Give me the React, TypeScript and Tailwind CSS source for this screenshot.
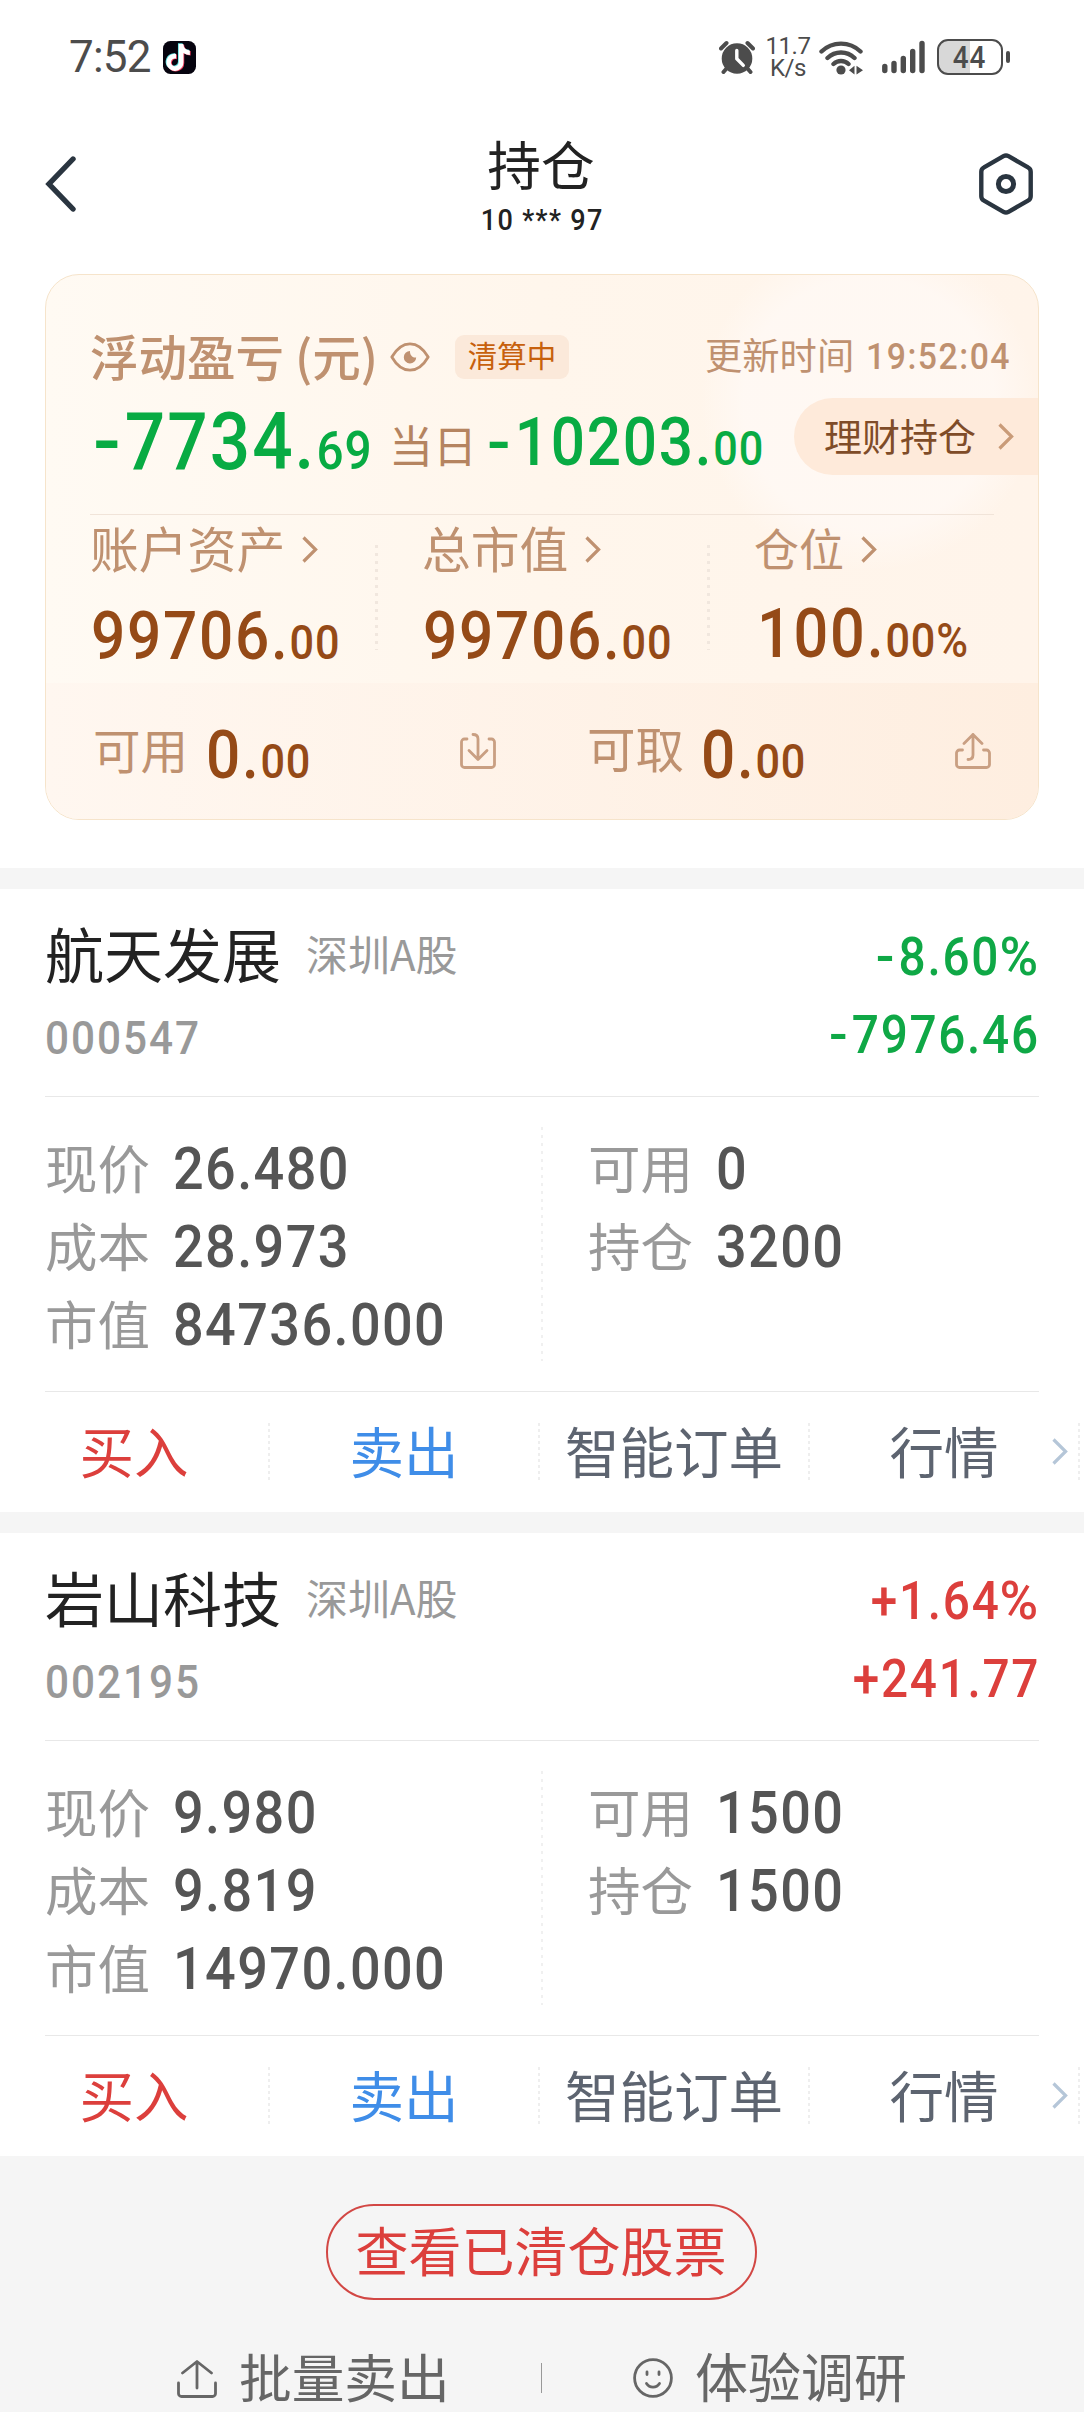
import type { ReactNode } from 'react'
import clsx from 'clsx'

type Stock = {
  name: string
  market: string
  code: string
  percent: string
  profit: string
  price: string
  cost: string
  value: string
  available: string
  holding: string
}

const stocks: Stock[] = [
  {
    name: '航天发展',
    market: '深圳A股',
    code: '000547',
    percent: '-8.60%',
    profit: '-7976.46',
    price: '26.480',
    cost: '28.973',
    value: '84736.000',
    available: '0',
    holding: '3200',
  },
  {
    name: '岩山科技',
    market: '深圳A股',
    code: '002195',
    percent: '+1.64%',
    profit: '+241.77',
    price: '9.980',
    cost: '9.819',
    value: '14970.000',
    available: '1500',
    holding: '1500',
  },
]

// Narrowed digits with open tracking, close to a DIN face
const NUM = "font-['Roboto','Liberation_Sans',sans-serif] font-medium leading-none whitespace-nowrap scale-x-90"

function Chevron({ className }: { className?: string }) {
  return (
    <svg viewBox="0 0 16 27" className={clsx('h-[27px] w-4 shrink-0', className)} fill="none" stroke="currentColor" strokeWidth="3.2">
      <path d="M1.5 1.5 13.6 13.5 1.5 25.5" />
    </svg>
  )
}

// Amount with a large integer part and smaller decimals
function Amount({ int, frac, className, fracClassName }: { int: string; frac: string; className?: string; fracClassName?: string }) {
  const negative = int.startsWith('-')
  return (
    <div className={clsx(NUM, 'origin-left tracking-[0.029em]', className)}>
      {negative ? <span className="-ml-px mr-[6px] inline-block origin-left scale-x-115">-</span> : null}
      {negative ? int.slice(1) : int}.
      <span className={clsx('tracking-[0.018em]', fracClassName ?? 'text-[48px]')}>{frac}</span>
    </div>
  )
}

const notePath =
  'M19.59 6.69a4.83 4.83 0 0 1-3.77-4.25V2h-3.45v13.67a2.89 2.89 0 0 1-5.2 1.74 2.89 2.89 0 0 1 2.31-4.64 2.93 2.93 0 0 1 .88.13V9.4a6.84 6.84 0 0 0-1-.05A6.33 6.33 0 0 0 5 20.1a6.34 6.34 0 0 0 10.86-4.43v-7a8.16 8.16 0 0 0 4.77 1.52v-3.4a4.85 4.85 0 0 1-1-.1z'

function StatusBar() {
  return (
    <div className="flex h-[114px] items-center pl-[69px] text-[#4c4c4c]">
      <span className="w-[94px] font-['Roboto',sans-serif] text-[44px] leading-none tracking-[-0.8px]">7:52</span>
      <svg viewBox="0 0 33 33" className="h-[33px] w-[33px]">
        <rect width="33" height="33" rx="7.5" fill="#06040f" />
        <g transform="translate(-.8 .3) scale(1.34)">
          <path fill="#5fe3e3" transform="translate(-.6 -.5)" d={notePath} />
          <path fill="#ee3a5c" transform="translate(.6 .5)" d={notePath} />
          <path fill="#fff" d={notePath} />
        </g>
      </svg>

      <svg viewBox="0 0 36 34" className="ml-[523px] h-[34px] w-9">
        <circle cx="18" cy="18.5" r="15.3" fill="#4c4c4c" />
        <path d="M2 8.5 7.5 3M34 8.5 28.5 3M8 28l-3.5 4M28 28l3.5 4" stroke="#4c4c4c" strokeWidth="4" strokeLinecap="round" />
        <path d="M17.8 10.5v8.2l6.5 6.7" stroke="#fff" strokeWidth="3.4" fill="none" strokeLinecap="round" strokeLinejoin="round" />
      </svg>
      <p className="ml-[10px] w-[46px] text-center font-['Roboto',sans-serif] text-[24px] leading-[22px] tracking-[-0.5px]">
        11.7
        <br />
        K/s
      </p>
      <svg viewBox="0 0 44 35" className="ml-[8px] h-[35px] w-11" fill="none" stroke="#4c4c4c" strokeWidth="4.4" strokeLinecap="round">
        <path d="M2.5 11.5a28 28 0 0 1 39 0M8.5 18a19.5 19.5 0 0 1 27 0M14.5 24a11 11 0 0 1 15 0" />
        <circle cx="22" cy="30" r="4.6" fill="#4c4c4c" stroke="none" />
        <path d="M30 30.2l5.5-4.4v8.6zM44 30.2l-6.5-4.4v8.6z" fill="#4c4c4c" stroke="none" />
      </svg>
      <svg viewBox="0 0 43 34" className="ml-[19px] h-[34px] w-[43px]" stroke="#4c4c4c" strokeWidth="5.4" strokeLinecap="round">
        <path d="M2.8 26.5v4M12 23.5v7M21.3 18.5v12M30.7 11.5v19M40 3.5v27" />
      </svg>
      <div className="ml-3 flex h-9 w-[66px] items-center justify-center rounded-[11px] border-[2.5px] border-[#4c4c4c] bg-[linear-gradient(to_right,#d8d8d8_50%,transparent_50%)]">
        <span className={clsx(NUM, 'text-[31px] tracking-[0.03em]')}>44</span>
      </div>
      <div className="ml-[3px] h-3 w-[4px] rounded-full bg-[#4c4c4c]" />
    </div>
  )
}

function Header() {
  return (
    <header className="mb-5 grid h-[140px] grid-cols-[1fr_auto_1fr] items-center">
      <svg viewBox="0 0 31 56" className="ml-[45px] h-14 w-[31px]" fill="none" stroke="#2a3540" strokeWidth="5.4" strokeLinecap="round">
        <path d="M28 3 4 28l24 25" />
      </svg>
      <div className="flex flex-col items-center self-start pt-[22px] text-[#222]">
        <h1 className="mr-[2px] text-[53.7px] leading-none">持仓</h1>
        <p className={clsx(NUM, 'mt-[15px] text-[30px] tracking-[0.05em]')}>10 *** 97</p>
      </div>
      <svg viewBox="0 0 54 62" className="mr-[51px] h-[62px] w-[54px] justify-self-end" fill="none" stroke="#2a3540" strokeWidth="4.4" strokeLinejoin="round">
        <path d="M24.5 3.2a5 5 0 0 1 5 0l19.5 11.2a5 5 0 0 1 2.7 4.4v24.4a5 5 0 0 1-2.7 4.4L29.5 58.8a5 5 0 0 1-5 0L5 47.6a5 5 0 0 1-2.7-4.4V18.8A5 5 0 0 1 5 14.4z" />
        <circle cx="27" cy="31" r="7.6" strokeWidth="5" />
      </svg>
    </header>
  )
}

function Metric({ label, children }: { label: string; children: ReactNode }) {
  return (
    <div className="w-[285px] shrink-0">
      <div className="mt-2 flex h-12 items-center text-[#bf9170]">
        <span className={clsx('leading-none', label.length === 2 ? 'text-[45px]' : 'text-[48.8px]')}>{label}</span>
        <Chevron className="mt-1 ml-[17px]" />
      </div>
      {children}
    </div>
  )
}

function Dots({ className }: { className: string }) {
  return <div className={clsx('shrink-0', className)} />
}

function AssetCard() {
  return (
    <section className="relative mx-[45px] mb-12 h-[546px] overflow-hidden rounded-[34px] border border-[#f6e4cb] bg-linear-to-r from-[#fffaf3] via-[#fff6ec] to-[#fff4ea]">
      <div className="absolute top-[-40px] left-[655px] h-[336px] w-[336px] rounded-full bg-[radial-gradient(closest-side,#fff9f5_75%,transparent)] opacity-80" />
      <div className="relative">
        <div className="flex h-[112px] items-center pt-[52px] pr-[30px] pl-11">
          <h2 className="mb-1 w-[300px] text-[48.5px] leading-none font-medium whitespace-nowrap text-[#bf9170]">浮动盈亏 (元)</h2>
          <svg viewBox="0 0 40 30" className="h-[30px] w-10" fill="none" stroke="#bf9170" strokeWidth="2.8">
            <path d="M1.8 15C7 6 13 1.8 20 1.8S33 6 38.2 15C33 24 27 28.2 20 28.2S7 24 1.8 15z" strokeLinejoin="round" />
            <path d="M20 9a6.2 6.2 0 1 0 6.2 6.4c-3.5.8-6.5-2.4-6.2-6.4z" fill="#bf9170" stroke="none" />
          </svg>
          <span className="ml-[25px] flex h-11 w-[114px] items-center justify-center rounded-[9px] bg-[#fbe9da] pb-1 text-[29.5px] leading-none text-[#c7600c]">
            清算中
          </span>
          <div className="ml-auto flex items-center whitespace-nowrap text-[#bf9170]">
            <span className="mb-1 w-[161px] text-[37.3px] leading-none">更新时间</span>
            <span className={clsx(NUM, 'w-[142px] origin-left text-[37.5px] tracking-[0.045em]')}>19:52:04</span>
          </div>
        </div>

        <div className="flex h-[127px] items-start pl-12 text-[#08ab43]">
          <Amount int="-7734" frac="69" className="mt-4 w-[295px] text-[79px]" fracClassName="text-[53px]" />
          <span className="mt-[35px] w-[99px] text-[44px] leading-none text-[#b58460]">当日</span>
          <Amount int="-10203" frac="00" className="mt-[22px] w-[290px] text-[67px]" />
          <button
            type="button"
            className="mt-[11px] ml-auto flex h-[77px] w-[244px] shrink-0 items-center rounded-l-full bg-[#feeada] pl-[30px] text-[#7f4c28]"
          >
            <span className="mb-1 text-[38px] leading-none">理财持仓</span>
            <Chevron className="ml-[22px] text-[#c99b78]" />
          </button>
        </div>

        <div className="mx-11 h-px bg-[#f1e4d9]" />

        <div className="flex h-[168px] pl-11 text-[#954a17]">
          <Metric label="账户资产">
            <Amount int="99706" frac="00" className="mt-8 ml-px text-[67px]" />
          </Metric>
          <Dots className="mt-[30px] mr-11 h-[105px] w-[3px] bg-[repeating-linear-gradient(to_bottom,#f1e7de_0_3px,transparent_3px_8px)]" />
          <Metric label="总市值">
            <Amount int="99706" frac="00" className="mt-8 ml-px text-[67px]" />
          </Metric>
          <Dots className="mt-[30px] mr-11 h-[105px] w-[3px] bg-[repeating-linear-gradient(to_bottom,#f1e7de_0_3px,transparent_3px_8px)]" />
          <Metric label="仓位">
            <Amount int="100" frac="00%" className="mt-[29px] ml-[3px] text-[68px]" />
          </Metric>
        </div>

        <div className="flex h-[136px] items-start bg-linear-to-r from-[#fff7f0] to-[#feeee0] pl-[47px] text-[#954a17]">
          <span className="mt-[42px] w-[113px] text-[47.5px] leading-none text-[#bf9170]">可用</span>
          <Amount int="0" frac="00" className="mt-[39px] w-[254px] text-[67px]" />
          <svg viewBox="0 0 36 36" className="mt-[50px] h-9 w-9" fill="none" stroke="#c99f82" strokeWidth="2.8" strokeLinecap="round" strokeLinejoin="round">
            <path d="M7 6H4.5a3 3 0 0 0-3 3v22.500a3 3 0 0 0 3 3h27a3 3 0 0 0 3-3V9a3 3 0 0 0-3-3H29" />
            <path d="M13 1.5c3.500 0 5 1.500 5 4.500v20M9 17.500l9 9 9-9" />
          </svg>
          <span className="mt-[40px] ml-[91px] w-[114px] text-[48.5px] leading-none text-[#bf9170]">可取</span>
          <Amount int="0" frac="00" className="mt-[39px] w-[254px] text-[67px]" />
          <svg viewBox="0 0 36 36" className="mt-[50px] h-9 w-9" fill="none" stroke="#c99f82" strokeWidth="2.8" strokeLinecap="round" strokeLinejoin="round">
            <path d="M7.5 17H4.500a3 3 0 0 0-3 3v11.500a3 3 0 0 0 3 3h27a3 3 0 0 0 3-3V20a3 3 0 0 0-3-3h-3" />
            <path d="M13 26.500c3.500 0 5-1.500 5-4.500V1.500M9 10.500l9-9 9 9" />
          </svg>
        </div>
      </div>
    </section>
  )
}

function Field({ label, value }: { label: string; value: string }) {
  return (
    <div className="flex h-[78px] items-center">
      <span className="mb-[4px] w-[128px] text-[52.5px] leading-none text-[#999]">{label}</span>
      <span className={clsx(NUM, 'mt-[2px] origin-left text-[60px] tracking-[0.026em] text-[#555]')}>{value}</span>
    </div>
  )
}

const actions = [
  { label: '买入', className: 'text-[#dc3f3c]' },
  { label: '卖出', className: 'text-[#3f8de8]' },
  { label: '智能订单', className: 'text-[#5d6470]' },
  { label: '行情', className: 'text-[#5d6470]' },
]

function Signed({ value }: { value: string }) {
  return (
    <div className={clsx(NUM, '-mr-px origin-right text-[53px] tracking-[0.036em]')}>
      <span className={value.startsWith('-') ? 'mr-[4px] inline-block scale-x-115' : undefined}>{value[0]}</span>
      {value.slice(1, -1)}
      <span className={value.endsWith('%') ? 'ml-[3px] inline-block origin-right scale-x-110' : undefined}>{value.slice(-1)}</span>
    </div>
  )
}

function StockCard({ stock }: { stock: Stock }) {
  return (
    <section className="h-[623px] bg-white">
      <div className="flex h-[207px] justify-between px-[45px]">
        <div className="pt-[34px]">
          <div className="flex items-center">
            <h3 className="text-[59px] leading-none text-[#222]">{stock.name}</h3>
            <span className="ml-[25px] text-[42px] leading-none text-[#999]">{stock.market}</span>
          </div>
          <p className={clsx(NUM, 'mt-[32px] origin-left text-[47px] tracking-[0.046em] text-[#999]')}>{stock.code}</p>
        </div>
        <div className={clsx('flex flex-col items-end gap-[25px] pt-[42px]', stock.profit.startsWith('-') ? 'text-[#0fa846]' : 'text-[#dc3f3c]')}>
          <Signed value={stock.percent} />
          <Signed value={stock.profit} />
        </div>
      </div>

      <div className="mx-[45px] h-px bg-[#e8e8e8]" />

      <div className="flex h-[294px] pl-[45px]">
        <div className="w-[496px] pt-8">
          <Field label="现价" value={stock.price} />
          <Field label="成本" value={stock.cost} />
          <Field label="市值" value={stock.value} />
        </div>
        <Dots className="mt-[30px] h-[234px] w-[2px] bg-[repeating-linear-gradient(to_bottom,#f0f0f0_0_3px,transparent_3px_8px)]" />
        <div className="ml-[45px] pt-8">
          <Field label="可用" value={stock.available} />
          <Field label="持仓" value={stock.holding} />
        </div>
      </div>

      <div className="mx-[45px] h-px bg-[#e8e8e8]" />

      <div className="relative flex h-[120px] items-center">
        {actions.map((action) => (
          <div key={action.label} className="flex w-[270px] shrink-0 items-center last:w-[275px]">
            <span className={clsx('mb-[4px] flex-1 text-center text-[54.5px] leading-none', action.className)}>{action.label}</span>
            <Dots className="h-[58px] w-[2px] bg-[repeating-linear-gradient(to_bottom,#eee_0_3px,transparent_3px_6px)]" />
          </div>
        ))}
        <Chevron className="absolute top-[46px] right-4 text-[#b5c6d8]" />
      </div>
    </section>
  )
}

function Footer() {
  return (
    <footer className="flex flex-col items-center pt-12">
      <button
        type="button"
        className="mr-[2px] flex h-24 w-[431px] items-center justify-center rounded-full border-2 border-[#d24744] pb-[6px] text-[53px] leading-none text-[#dc3f3c]"
      >
        查看已清仓股票
      </button>
      <div className="mt-10 flex h-[72px] w-full items-center pl-[177px] text-[#666]">
        <svg viewBox="0 0 40 38" className="mt-[5px] h-[38px] w-10" fill="none" stroke="currentColor" strokeWidth="2.8" strokeLinecap="round" strokeLinejoin="round">
          <path d="M1.5 23v10.500a3 3 0 0 0 3 3h31a3 3 0 0 0 3-3V23M20 28V2M5.500 13 20 1.500 34.500 13" />
        </svg>
        <span className="mb-[2px] ml-[22px] w-[302px] text-[52.7px] leading-none">批量卖出</span>
        <div className="mt-1 h-[30px] w-px bg-[#999]" />
        <svg viewBox="0 0 40 40" className="mt-[4px] ml-[91px] h-10 w-10" fill="none" stroke="currentColor" strokeWidth="2.8" strokeLinecap="round">
          <circle cx="20" cy="20" r="18.4" />
          <path d="M14 14v2.500M26 14v2.500M13.500 25.500c1.500 2.400 3.800 3.600 6.500 3.600s5-1.200 6.500-3.600" />
        </svg>
        <span className="mb-[2px] ml-[22px] text-[53px] leading-none">体验调研</span>
      </div>
    </footer>
  )
}

export default function App() {
  return (
    <div className="h-[2412px] w-[1084px] overflow-hidden bg-[#f5f5f5] font-['Noto_Sans_CJK_SC',sans-serif]">
      <div className="flow-root bg-white">
        <StatusBar />
        <Header />
        <AssetCard />
      </div>
      <main className="flex flex-col gap-[21px] pt-[21px]">
        {stocks.map((stock) => (
          <StockCard key={stock.code} stock={stock} />
        ))}
      </main>
      <Footer />
    </div>
  )
}
